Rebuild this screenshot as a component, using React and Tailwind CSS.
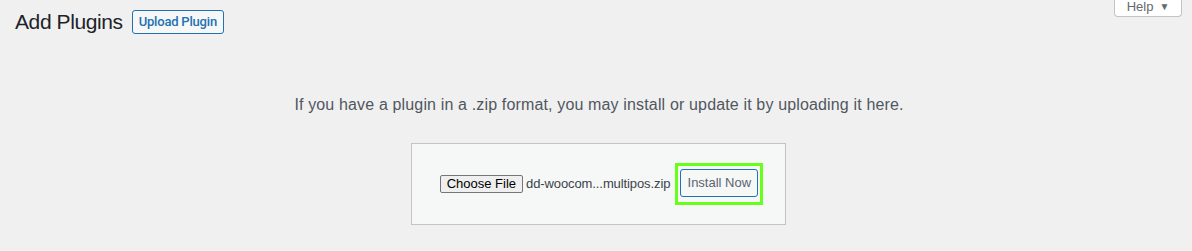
export default function App() {
  return (
    <div className="w-[1192px] h-[251px] bg-[#f0f0f1] font-['Liberation_Sans',Arial,sans-serif] text-[#3c434a] overflow-hidden">
      <div className="flex justify-end pr-[10px]">
        <button className="h-[17px] w-[68px] bg-white border border-t-0 border-[#c3c4c7] rounded-b-[4px] text-[13px] leading-[14px] text-[#646970] flex items-start justify-center gap-[6px]">
          <span>Help</span>
          <span className="text-[10px]">▼</span>
        </button>
      </div>
      <div className="flex items-center pl-[15px] -mt-[8px] h-[26px] gap-[9px]">
        <h1 className="text-[21px] leading-[24px] tracking-[-0.4px] text-[#1d2327]">Add Plugins</h1>
        <button className="h-[24px] px-[6px] border border-[#2271b1] rounded-[3px] bg-[#f6f7f7] text-[#2271b1] text-[13px] font-medium font-['Roboto',sans-serif] tracking-[-0.2px] leading-[22px]">
          Upload Plugin
        </button>
      </div>
      <p className="mt-[60px] pl-[6px] text-center text-[16px] leading-[20px] tracking-[0.15px] text-[#50575e]">
        If you have a plugin in a .zip format, you may install or update it by uploading it here.
      </p>
      <div className="flex justify-center mt-[28px] pl-[4px]">
        <div className="w-[375px] h-[82px] bg-[#f6f7f7] border border-[#c3c4c7] flex items-center justify-center gap-[5px] pl-[7px]">
          <div className="flex items-center gap-[3px]">
            <span className="h-[18px] px-[6px] border border-[#767676] rounded-[2px] bg-[#efefef] text-[13px] leading-[16px] text-black">
              Choose File
            </span>
            <span className="text-[13px] tracking-[-0.1px] text-[#3c434a]">dd-woocom...multipos.zip</span>
          </div>
          <div className="border-[3px] border-[#66ff1a] p-[2px] pt-[3px] pb-[5px]">
            <button className="h-[28px] w-[78px] border border-[#2271b1] rounded-[3px] bg-[#f6f7f7] text-[13px] leading-[26px] text-[#5a6570]">
              Install Now
            </button>
          </div>
        </div>
      </div>
    </div>
  );
}
